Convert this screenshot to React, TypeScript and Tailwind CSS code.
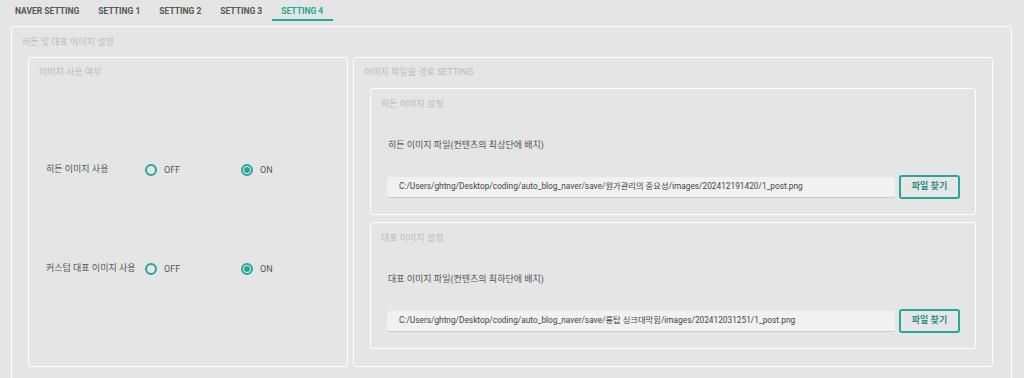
import React from "react";

const font = { fontFamily: "Roboto, 'Noto Sans CJK KR', 'Noto Sans', sans-serif" };

function Radio({ checked, label }: { checked: boolean; label: string }) {
  return (
    <div className="flex items-center gap-[7px]">
      <span className="w-[12px] h-[12px] rounded-full border-2 border-[#26a69a] flex items-center justify-center box-border">
        {checked && <span className="w-[6px] h-[6px] rounded-full bg-[#26a69a]" />}
      </span>
      <span className="text-[9px] text-[#555] leading-none">{label}</span>
    </div>
  );
}

function RadioRow({ label }: { label: string }) {
  return (
    <div className="flex items-center h-[20px] pl-[7px]">
      <div className="w-[99px] text-[9px] text-[#555] whitespace-nowrap">{label}</div>
      <div className="w-[96px]">
        <Radio checked={false} label="OFF" />
      </div>
      <Radio checked={true} label="ON" />
    </div>
  );
}

function FileBox({ title, label, path }: { title: string; label: string; path: string }) {
  return (
    <div className="h-[127px] border border-white rounded-[3px] flex flex-col pl-[10px] pr-[15px] pt-[9px]">
      <div className="text-[9px] text-[#bbb] leading-[12px]">{title}</div>
      <div className="text-[9px] text-[#555] leading-[14px] mt-[28px] pl-[7px]">{label}</div>
      <div className="flex items-center mt-[23px] pl-[6px]">
        <div className="w-[508px] h-[21px] bg-[#f1f1f1] border-b border-[#c8c8c8] rounded-[2px] flex items-center pl-[12px] text-[8.3px] text-[#444] whitespace-nowrap overflow-hidden">
          {path}
        </div>
        <button className="ml-[4px] w-[61px] h-[24px] border-2 border-[#26a69a] rounded-[3px] text-[9px] font-bold text-[#2a8f86] bg-[#e6e6e6]">
          파일 찾기
        </button>
      </div>
    </div>
  );
}

export default function App() {
  const tabs = ["NAVER SETTING", "SETTING 1", "SETTING 2", "SETTING 3", "SETTING 4"];
  return (
    <div className="w-[1024px] h-[378px] bg-[#e5e5e5] overflow-hidden" style={font}>
      <div className="flex pl-[5.5px] h-[21px]">
        {tabs.map((t, i) => (
          <div
            key={t}
            className={
              "px-[9.5px] h-[21px] pt-[6px] leading-[10px] text-[8.5px] font-bold " +
              (i === 4 ? "text-[#26a69a] border-b-2 border-[#26a69a]" : "text-[#555] border-b-2 border-transparent")
            }
          >
            {t}
          </div>
        ))}
      </div>
      <div className="ml-[11px] mr-[12px] mt-[5px] border border-white rounded-[3px] h-[400px] pl-[16px] pr-[18px]">
        <div className="text-[9px] text-[#bbb] leading-[14px] mt-[8px] -ml-[6px]">히든 및 대표 이미지 설정</div>
        <div className="flex gap-[5px] mt-[8px]">
          <div className="w-[320px] h-[310px] border border-white rounded-[3px] flex flex-col pl-[10px] pt-[8px]">
            <div className="text-[9px] text-[#bbb] leading-[12px]">이미지 사용 여부</div>
            <div className="mt-[82px]">
              <RadioRow label="히든 이미지 사용" />
            </div>
            <div className="mt-[79px]">
              <RadioRow label="커스텀 대표 이미지 사용" />
            </div>
          </div>
          <div className="w-[640px] h-[310px] border border-white rounded-[3px] flex flex-col px-[16px] pt-[8px]">
            <div className="text-[9px] text-[#bbb] leading-[12px] -ml-[6px]">이미지 파일을 경로 SETTING</div>
            <div className="mt-[10px] flex flex-col gap-[7px]">
              <FileBox
                title="히든 이미지 설정"
                label="히든 이미지 파일(컨텐츠의 최상단에 배치)"
                path="C:/Users/ghtng/Desktop/coding/auto_blog_naver/save/원가관리의 중요성/images/202412191420/1_post.png"
              />
              <FileBox
                title="대표 이미지 설정"
                label="대표 이미지 파일(컨텐츠의 최하단에 배치)"
                path="C:/Users/ghtng/Desktop/coding/auto_blog_naver/save/롱탑 싱크대막힘/images/202412031251/1_post.png"
              />
            </div>
          </div>
        </div>
      </div>
    </div>
  );
}
